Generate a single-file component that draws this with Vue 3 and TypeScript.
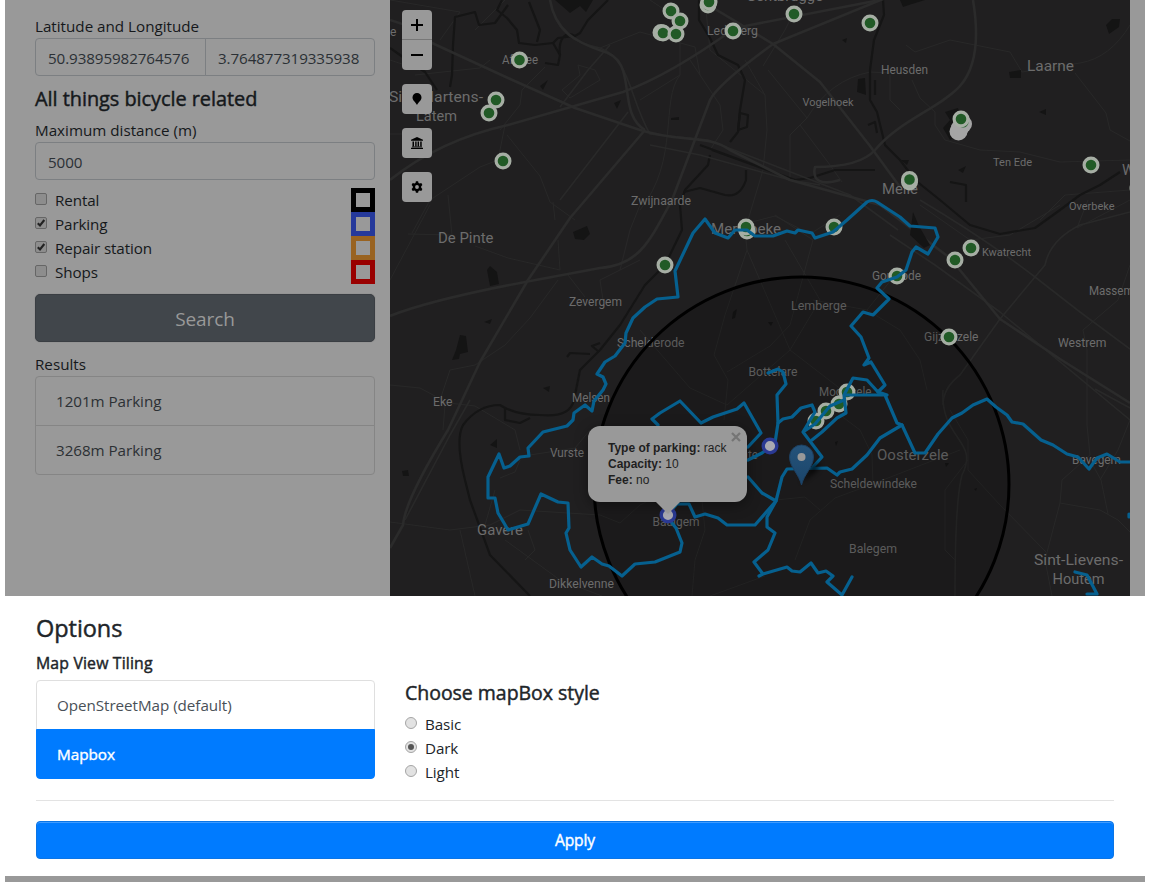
<script setup lang="ts">
import { ref } from 'vue'

interface Label { t: string; x: number; y: number; w?: number; s?: number }
interface Facility { name: string; color: string; checked: boolean }

const latitude = ref('50.93895982764576')
const longitude = ref('3.764877319335938')
const distance = ref('5000')
const facilities = ref<Facility[]>([
  { name: 'Rental', color: '#000000', checked: false },
  { name: 'Parking', color: '#25399b', checked: true },
  { name: 'Repair station', color: '#996321', checked: true },
  { name: 'Shops', color: '#990000', checked: false },
])
const results = ['1201m Parking', '3268m Parking']
const tilings = ['OpenStreetMap (default)', 'Mapbox']
const tiling = ref('Mapbox')
const styles = ['Basic', 'Dark', 'Light']
const mapStyle = ref('Dark')

const labels: Label[] = [
  { t: 'Gentbrugge', x: 746, y: 1, w: 77, s: 15 },
  { t: 'Ledeberg', x: 707, y: 35, w: 51, s: 12.5 },
  { t: 'Afsnee', x: 502, y: 64, w: 36, s: 12 },
  { t: 'Heusden', x: 881, y: 74, w: 47, s: 12 },
  { t: 'Laarne', x: 1027, y: 71, w: 47, s: 15.5 },
  { t: 'Vogelhoek', x: 802.5, y: 105.5, w: 51 },
  { t: 'Ten Ede', x: 993, y: 166, w: 39 },
  { t: 'Overbeke', x: 1069, y: 210, w: 45.5 },
  { t: 'Sint-Martens-', x: 389, y: 102, w: 94, s: 15.5 },
  { t: 'Latem', x: 416, y: 120.5, w: 41, s: 15.5 },
  { t: 'e', x: 390, y: 36, s: 12 },
  { t: 'Melle', x: 882, y: 194, w: 36, s: 14.5 },
  { t: 'W', x: 1122, y: 175, s: 14.5 },
  { t: 'Zwijnaarde', x: 631, y: 205, w: 60, s: 12 },
  { t: 'De Pinte', x: 438, y: 243, w: 55.5, s: 15.5 },
  { t: 'Merelbeke', x: 711, y: 234, w: 70, s: 14.5 },
  { t: 'Kwatrecht', x: 982, y: 256, w: 49 },
  { t: 'Massemen', x: 1089, y: 295, w: 57, s: 12 },
  { t: 'Westrem', x: 1058, y: 346.5, w: 48.5, s: 12 },
  { t: 'Gontrode', x: 872, y: 279.5, w: 49, s: 12 },
  { t: 'Lemberge', x: 791, y: 309.5, w: 55.5, s: 12 },
  { t: 'Zevergem', x: 569, y: 306, w: 53, s: 12 },
  { t: 'Schelderode', x: 617, y: 346.5, w: 67.5, s: 12 },
  { t: 'Gijzenzele', x: 924, y: 341, w: 54.5, s: 12 },
  { t: 'Bottelare', x: 748.5, y: 376, w: 49, s: 12 },
  { t: 'Moortsele', x: 819, y: 396, w: 52.5, s: 12 },
  { t: 'Melsen', x: 572, y: 401.5, w: 38, s: 12 },
  { t: 'Eke', x: 433, y: 406, w: 19.5, s: 12 },
  { t: 'Vurste', x: 550, y: 457, w: 34, s: 12 },
  { t: 'Munte', x: 725, y: 459, w: 33, s: 12 },
  { t: 'Oosterzele', x: 877, y: 459.5, w: 71.5, s: 14.5 },
  { t: 'Bavegem', x: 1072, y: 463.5, w: 49, s: 12 },
  { t: 'Scheldewindeke', x: 830, y: 488, w: 87, s: 12 },
  { t: 'Gavere', x: 477, y: 535, w: 46, s: 14.5 },
  { t: 'Baaigem', x: 652.5, y: 526, w: 47, s: 12 },
  { t: 'Balegem', x: 849, y: 553, w: 48, s: 12 },
  { t: 'Dikkelvenne', x: 549, y: 588, w: 65, s: 12 },
  { t: 'Sint-Lievens-', x: 1034, y: 565, w: 89, s: 15 },
  { t: 'Houtem', x: 1052.5, y: 584, w: 52, s: 15 },
]

const stations: [number, number][] = [
  [671, 11], [661, 32.5], [663, 33], [680, 21], [676, 34], [708, 5], [709, 2], [733, 31],
  [794, 14], [870, 23], [519.5, 60], [496, 100], [489, 113], [503, 161], [909.5, 182],
  [909.5, 179.5], [1091, 165], [747, 231], [746, 227], [834, 227], [665, 265],
  [897, 276], [971, 248], [955, 260], [949, 337], [816, 421], [826, 411], [839, 404], [847, 392],
  [1138, 188],
]

const roads = [
  'M390 180Q440 140 508 125L623 92Q670 75 735 28L880 0',
  'M390 20Q410 25 432 43L508 78L575 108L640 130C680 143 708 134 730 150L790 180L880 205L950 258L1000 319L1060 359L1130 403',
  'M550 0C555 30 575 42 602 51C640 60 615 112 645 130',
  'M645 130L570 218L528 280L480 362L448 430Q405 500 403 525L390 548',
  'M390 316Q430 300 525 282L600 268C640 265 650 240 672 200L710 100Q718 84 773 44L905 -10',
  'M700 0L773 44L820 82L870 146L900 187',
  'M973 0Q983 60 960 86C940 108 900 120 875 150Q860 167 815 167C812 180 820 186 840 180',
]
const midRoads = [
  'M550 -2C555 36 580 44 600 48C630 58 630 100 650 134L708 140L850 195L898 230',
  'M560 107L588 70L610 45M628 112L560 200M650 145L700 155L790 180L820 185',
  'M890 235L935 265L1000 312L1130 420M1000 319L960 375Q943 388 943 405',
  'M1000 319L1045 265Q1050 240 1080 225L1130 212M920 200Q990 242 1035 277L1080 312L1130 349',
  'M943 390C940 440 980 440 962 475Q955 500 955 596',
  'M1095 389L1130 408M470 400L450 435L405 520',
]
const lanes = [
  'M390 134H403M390 280L430 205M448 195L452 235L408 234M475 246L508 258L560 270L558 240M555 220L553 202',
  'M505 125L498 160L480 167L430 200L412 233M507 135L540 176L550 202L575 220',
  'M600 48L640 32L695 47L700 75M580 75L562 90L570 98L600 80L595 70L578 65Z',
  'M500 130L520 105L522 90L545 67M505 0L475 30M415 75L480 68L490 60',
  'M640 100L680 75V20L650 0M690 60L720 105L723 130L710 150M680 75C660 100 680 160 640 210',
  'M705 0L710 50L765 95L767 130L763 170L745 230L747 250L725 315L714 355L728 380L724 420',
  'M745 60L765 95M768 70L807 118L790 135L790 178M800 125L830 165L842 182M800 0L785 30L763 66',
  'M807 118Q830 80 870 72L890 73M740 225L775 216L810 234L840 215M775 215L813 240L790 325L770 346L727 372',
  'M747 250L790 350L842 390M785 240L820 300L790 350M790 350L727 405L690 388L640 330',
  'M813 300L867 310L895 275M867 310L900 330L920 360L927 390',
  'M906 45L915 52L950 40L1010 52L1022 72L1080 63Q1110 58 1130 25',
  'M1075 73L1106 113L1110 130L1130 141M912 80L920 98L935 112L935 125L945 140L980 150L1020 152L1060 162L1130 160',
  'M900 110L890 100L890 75M1130 190L1065 195L1040 220M920 205L970 240L1010 235L1060 205M1088 200L1077 228L1130 200',
  'M1130 265L1118 300L1083 330L1087 350V425L1090 455L1062 480L1060 503L1100 510L1118 520L1130 532',
  'M1060 503L1045 560L1052 596M1090 460L1101 480L1108 514M950 410L968 440V470L1000 505L1046 552',
  'M968 460L945 490L945 550L955 560M390 522L450 530L490 525L520 510L600 515L620 523L640 505L650 500',
  'M460 530L475 596M530 455L575 448L590 430M505 540L560 580L602 596M528 530L535 550L525 560',
  'M440 402L475 406L515 430L520 450M445 405L443 430M500 478L515 472L520 460M485 525L495 490',
  'M558 280L530 318L505 345L475 365L450 370L440 400M568 275L585 297M390 385L420 388L435 396',
  'M710 430L700 480L705 530L695 560L692 596M710 596L765 576M776 500L805 497L820 510',
  'M795 560L810 520L835 498L870 485M840 415L860 430L872 455L873 485M870 485L960 450M1130 420L1118 450L1100 480',
  'M390 0L460 12L440 40M390 60L420 70M640 260L600 280L603 300M640 205L630 230L620 270',
]
const water = [
  'M502 0L497 10L507 18L517 30L519 43L535 45L553 43L560 55L558 65L545 63M508 5L495 23L479 25L475 12L455 17L453 45L452 75L450 87M529 2L540 30L537 42',
  'M390 48L400 55L425 72L437 90M553 43L558 38L575 36L580 33L588 20L598 10L608 0M575 36C565 30 558 40 560 55',
  'M699 0V20L710 38L718 55L738 65L745 80L740 110L738 132L730 142M715 0L720 -5',
  'M883 0L884 15L874 40L870 70V100L877 112L885 145L900 160L915 180L940 200L970 225L1000 234L1035 228L1060 210L1080 195L1100 185L1120 172',
  'M875 170H835L810 178L795 180L712 150M795 180L700 145M710 155L708 165L685 190L680 205L682 230L665 265L645 285L620 325L600 350L580 370L574 400Q570 418 540 415Q515 415 500 405Q478 405 463 425Q455 440 465 480L470 500L490 555L530 596',
  'M684 192L700 188L725 195Q740 198 746 180V170M505 407L505 420L520 423L530 418M567 357L570 353L590 354M599 352L592 346L600 343',
  'M950 182L966 185V202M748 115L740 113L738 130L747 127ZM875 80V95M868 125L875 122L877 133',
]
const ponds = [
  'M555 0L570 13L580 6L586 12L593 0Z', 'M573 232L587 226L590 234L584 240L575 239Z',
  'M487 270L490 266L497 272L499 284L490 286Z', 'M460 335L466 336L468 352L460 354L459 359L452 360L456 350Z',
  'M945 112L958 108L965 130L950 140L943 128L950 120Z', 'M858 79L865 78L866 95L857 92Z',
  'M910 235L913 212L919 226L930 245L924 248Z', 'M1106 25L1112 19L1120 19L1119 27L1109 34Z',
  'M900 0L925 0L912 4L903 7Z', 'M1039 112L1046 109L1046 115Z', 'M1009 72L1021 70V78H1010Z',
  'M958 170L966 166L963 173Z', 'M540 86L548 80L543 90Z', 'M614 103L621 100L617 109Z',
  'M733 312L737 309L735 318L732 319Z', 'M768 322L773 322L771 326Z', 'M402 471L408 470L409 476H403Z',
  'M490 445L497 439V448Z', 'M543 388L550 386L549 392Z', 'M484 322L492 319L490 324Z',
  'M835 442L838 441L836 446Z', 'M945 463L949 463L946 467Z', 'M974 489L977 488L976 491Z',
  'M671 118L679 117V120H671Z', 'M842 40L847 38L846 43Z', 'M901 160L909 160L907 165Z',
]

const routes = [
  'M668 518L676 528L682 543L680 552L655 562L635 564L622 576L609 566L602 564L592 557L581 567L570 550L566 533L569 528L568 503L558 502L541 494L528 524L508 530L504 523L498 513L495 498H488V477L499 454L504 468L510 466L520 457L529 456L528 448L543 432L567 426L573 420L574 413L585 405L592 411L594 401L603 390L606 384L603 377L597 374L605 362L615 356L625 343L626 333L633 318L645 307L657 299L678 297L675 271L693 233L705 219L715 233L728 238L735 230H747L755 236L773 236L787 231L795 233L798 230L812 233L815 238L833 232L847 220L867 202Q872 199 877 202L900 217L910 226L935 228L938 237L928 254L916 247L912 252L906 270L897 277L882 282L877 288L889 299L873 315L863 312L851 326L861 337L869 358L864 365L871 362L885 385L878 392L867 380L853 378L844 395L846 413L837 418L822 432L812 440',
  'M846 395H885L897 423L902 425L915 453H925L938 434L952 418L962 413L973 405L987 399L996 407L1007 415L1012 422L1023 424L1041 440L1053 445L1067 454L1078 457L1089 469L1097 458L1107 454L1120 462H1130',
  'M878 392L887 395M902 425L880 438L867 455L852 469L840 472L837 475L827 468L787 469L782 477L776 501L755 525H727L718 518L705 514L695 517L689 504H677L668 514',
  'M748 477L762 493L776 501L767 517V527L775 533L768 550L754 562L763 574L787 567L792 571L800 572L811 563L818 573L826 571L833 576L827 582L842 595L852 577M763 574L759 576',
  'M658 425L652 419L660 413L680 401L701 423L713 417L737 409L744 403L761 433L748 447M748 460L762 453L775 443L778 423L777 395L786 384L783 372L778 369L768 373',
  'M778 423L783 419L792 417L801 408L812 405L815 412L803 432L822 457L813 467M803 432L815 424L830 406L844 400',
  'M1075 572L1087 575L1097 594L1087 594M1129 514V517',
]
</script>

<template>
  <div class="page">
    <div class="upper">
      <aside class="sidebar">
        <div class="label">Latitude and Longitude</div>
        <div class="group">
          <div class="field first">{{ latitude }}</div>
          <div class="field second">{{ longitude }}</div>
        </div>
        <h5 class="title">All things bicycle related</h5>
        <div class="label">Maximum distance (m)</div>
        <div class="field">{{ distance }}</div>
        <div class="facilities">
          <label v-for="f in facilities" :key="f.name" class="facility" @click="f.checked = !f.checked">
            <svg class="check" width="12" height="12" viewBox="0 0 12 12">
              <rect x=".5" y=".5" width="11" height="11" rx="1.5" fill="#8d8d8d" stroke="#666" />
              <path v-if="f.checked" d="M2.8 6.2L5 8.5L9.3 3" fill="none" stroke="#222" stroke-width="2.1" />
            </svg>
            <span class="name">{{ f.name }}</span>
            <span class="swatch" :style="{ borderColor: f.color }"></span>
          </label>
        </div>
        <button class="search">Search</button>
        <div class="label results">Results</div>
        <ul class="list dim">
          <li v-for="r in results" :key="r">{{ r }}</li>
        </ul>
      </aside>

      <div class="map">
        <svg class="tiles" width="740" height="596" viewBox="390 0 740 596">
          <defs>
            <linearGradient id="pin" x1="0" y1="0" x2="0" y2="1">
              <stop offset="0" stop-color="#25537a" />
              <stop offset="1" stop-color="#1b456a" />
            </linearGradient>
            <filter id="soft" x="-50%" y="-50%" width="200%" height="200%"><feGaussianBlur stdDeviation="2.5" /></filter>
          </defs>
          <rect x="390" width="740" height="596" fill="#201f20" />
          <g fill="none" stroke-linejoin="round">
            <path v-for="d in lanes" :key="d" :d="d" stroke="#282828" />
            <path v-for="d in water" :key="d" :d="d" stroke="#151515" stroke-width="2.2" />
            <path v-for="d in midRoads" :key="d" :d="d" stroke="#292929" stroke-width="1.6" />
            <path v-for="d in roads" :key="d" :d="d" stroke="#2b2b2b" stroke-width="2.6" />
          </g>
          <path v-for="d in ponds" :key="d" :d="d" fill="#141414" />
          <g class="places">
            <text v-for="l in labels" :key="l.t" :x="l.x" :y="l.y" :font-size="l.s ?? 11.5" :textLength="l.w" lengthAdjust="spacingAndGlyphs">{{ l.t }}</text>
          </g>
          <circle cx="801.5" cy="484.5" r="207.5" fill="#000" fill-opacity=".15" stroke="#000" stroke-width="3" />
          <g fill="#a5a5a5">
            <circle cx="958.5" cy="131.500" r="9" /><circle cx="960" cy="128" r="9" /><circle cx="963" cy="124" r="9" />
          </g>
          <circle cx="963" cy="122" r="5.5" fill="#22602a" />
          <g v-for="([x, y], i) in [...stations, [961, 119]]" :key="i">
            <circle :cx="x" :cy="y" r="6.900" fill="#215a26" stroke="#a6aea4" stroke-width="3.2" />
          </g>
          <g fill="none" stroke="#06608f" stroke-width="3.2" stroke-linejoin="round" stroke-linecap="round">
            <path v-for="d in routes" :key="d" :d="d" />
          </g>
          <g fill="#a9a9b2" stroke="#2a3993" stroke-width="3.4">
            <circle cx="770" cy="446" r="6.800" /><circle cx="668" cy="515" r="6.800" />
          </g>
          <path d="M801 483L812 465L820 462L818 470Z" filter="url(#soft)" opacity=".7" />
          <path d="M801.5 485C799 474 789.5 467 789.5 457A12 12 0 0 1 813.500 457C813.500 467 804 474 801.500 485Z" fill="url(#pin)" stroke="#1c4062" />
          <circle cx="801.5" cy="457" r="4" fill="#999" />
        </svg>

        <div class="controls">
          <div class="zoom">
            <button><svg width="14" height="14" viewBox="0 0 14 14"><path d="M7 1V13M1 7H13" stroke="#000" stroke-width="2" /></svg></button>
            <button><svg width="14" height="14" viewBox="0 0 14 14"><path d="M1 7H13" stroke="#000" stroke-width="2" /></svg></button>
          </div>
          <button class="tool"><svg width="10" height="12" viewBox="0 0 10 12"><path d="M5 0A4.5 4.5 0 0 1 9.500 4.500C9.500 7.500 6.500 9 5 12C3.500 9 .5 7.500 .5 4.500A4.500 4.500 0 0 1 5 0Z" /></svg></button>
          <button class="tool"><svg width="12" height="12" viewBox="0 0 12 12"><path d="M6 0L12 2.800V3.800H0V2.800ZM1.500 4.500H3V9.200H1.500ZM4.200 4.500H5.600V9.200H4.200ZM6.600 4.500H8V9.200H6.600ZM9.200 4.500H10.700V9.200H9.200ZM1 9.600H11V10.300H1ZM0 10.800H12V12H0Z" /></svg></button>
          <button class="tool"><svg width="12" height="12" viewBox="0 0 12 12"><path d="M4.900 .3H7.100L7.500 2L8.600 2.600L10.300 2.100L11.400 4L10.200 5.300V6.700L11.400 8L10.300 9.900L8.600 9.400L7.500 10L7.100 11.700H4.900L4.500 10L3.400 9.400L1.700 9.900L.6 8L1.800 6.700V5.300L.6 4L1.700 2.100L3.400 2.600L4.500 2ZM6 4.100A1.900 1.900 0 1 0 6 7.900A1.900 1.900 0 1 0 6 4.100Z" fill-rule="evenodd" /></svg></button>
        </div>

        <div class="popup">
          <svg class="close" width="10" height="10" viewBox="0 0 10 10"><path d="M1 1L9 9M9 1L1 9" stroke="#757575" stroke-width="2.2" /></svg>
          <div><b>Type of parking:</b> rack</div>
          <div><b>Capacity:</b> 10</div>
          <div><b>Fee:</b> no</div>
        </div>
      </div>
    </div>

    <section class="options">
      <h4>Options</h4>
      <div class="columns">
        <div class="tiling">
          <h6>Map View Tiling</h6>
          <ul class="list">
            <li v-for="t in tilings" :key="t" :class="{ active: t === tiling }" @click="tiling = t">{{ t }}</li>
          </ul>
        </div>
        <div class="styles">
          <h5>Choose mapBox style</h5>
          <label v-for="s in styles" :key="s" class="choice" @click="mapStyle = s">
            <span class="radio" :class="{ on: s === mapStyle }"></span>
            <span>{{ s }}</span>
          </label>
        </div>
      </div>
      <hr />
      <button class="apply">Apply</button>
    </section>
    <div class="below"></div>
  </div>
</template>

<style>
body { margin: 0; overflow: hidden; background: #fff; }
</style>

<style scoped>
.page { box-sizing: border-box; width: 1150px; height: 882px; padding: 0 5px; overflow: hidden; font: 15.2px/24px "Open Sans", "Noto Sans", sans-serif; letter-spacing: -.1px; color: #212529; }
* { box-sizing: border-box; }
button { font: inherit; letter-spacing: inherit; border: 0; padding: 0; }
h4, h5, h6, ul { margin: 0; padding: 0; list-style: none; font-weight: 400; }
h4, h5, h6 { -webkit-text-stroke: .45px currentColor; }
.label { letter-spacing: 0; }
.upper { display: flex; height: 596px; background: #999; }
.sidebar { width: 385px; padding: 14px 15px 0 30px; color: #15181b; }
.group { display: flex; }
.field { height: 38px; padding: 1px 12px 0; font-size: 15.200px; line-height: 37px; border: 1px solid #7c7f82; border-radius: 4px; color: #2b3035; letter-spacing: -.1px; }
.group .field { width: 171px; }
.group .first { border-radius: 4px 0 0 4px; }
.group .second { width: 170px; margin-left: -1px; border-radius: 0 4px 4px 0; }
.title { margin: 10px 0 8px; padding-top: 1px; font-size: 19.900px; line-height: 23px; letter-spacing: -.03px; }
.facilities { margin-top: 8px; }
.facility { display: flex; height: 24px; align-items: center; }
.check { margin-top: -3px; }
.name { margin-left: 8px; margin-top: -1px; }
.swatch { width: 24px; height: 24px; margin-left: auto; border: 5px solid; }
.search { display: block; width: 340px; height: 48px; margin: 10px 0; padding-top: 2px; border: 1px solid #3a3e43; border-radius: 5px; background: #41464b; color: #999; font-size: 19px; box-shadow: 0 0 1px #666; }
.list li { height: 50px; padding: 0 20px; line-height: 48px; border: 1px solid #dfdfdf; color: #495057; letter-spacing: -.04px; }
.list li + li { margin-top: -1px; }
.list li:first-child { border-radius: 4px 4px 0 0; }
.list li:last-child { border-radius: 0 0 4px 4px; }
.dim li { border-color: #858585; color: #2c3034; }
.list li.active { background: #007bff; border-color: #007bff; color: #fff; font-size: 15.300px; -webkit-text-stroke: .4px #fff; }
.map { position: relative; width: 740px; height: 596px; overflow: hidden; }
.tiles { display: block; }
.places { font-family: Roboto, sans-serif; letter-spacing: 0; fill: #6c6c6c; }
.controls { position: absolute; left: 12px; top: 10px; display: flex; flex-direction: column; gap: 14px; }
.controls button { display: flex; width: 30px; height: 30px; align-items: center; justify-content: center; background: #999; }
.zoom { border-radius: 4px; overflow: hidden; }
.zoom button:first-child { border-bottom: 1px solid #777; }
.controls .tool { border-radius: 4px; }
.popup { position: absolute; left: 198px; top: 426px; width: 159px; height: 76px; padding: 14px 0 0 20px; border-radius: 12px; background: #999; color: #1f1f1f; font: 12px/16px "Liberation Sans", Arial, sans-serif; letter-spacing: 0; white-space: nowrap; box-shadow: 0 3px 14px rgba(0, 0, 0, .4); }
.popup::after { content: ""; position: absolute; left: 68px; top: 76px; border: 12px solid transparent; border-top-color: #999; border-bottom: 0; }
.close { position: absolute; right: 6px; top: 6px; }
.options { height: 280px; padding: 20px 31px 0; background: #fff; }
.options h4 { height: 28px; line-height: 25px; font-size: 23.500px; letter-spacing: -.05px; }
.columns { display: flex; gap: 30px; height: 155px; }
.tiling { width: 339px; padding-top: 9px; }
.tiling h6 { height: 27px; font-size: 15.800px; line-height: 20px; letter-spacing: .16px; }
.styles { padding-top: 37px; }
.styles h5 { height: 31px; line-height: 24px; font-size: 19.500px; letter-spacing: -.03px; }
.choice { display: flex; height: 24px; align-items: center; }
.radio { display: flex; width: 12px; height: 12px; margin: -2px 8px 0 0; border: 1px solid #a5a5a5; border-radius: 50%; background: #e2e2e2; align-items: center; justify-content: center; }
.radio.on::after { content: ""; width: 6px; height: 6px; border-radius: 50%; background: #555; }
hr { height: 1px; margin: 1px 0 20px; border: 0; background: #e3e3e3; }
.apply { display: block; width: 100%; height: 38px; border: 1px solid #0b75e6; border-radius: 4px; background: #007bff; color: #fff; font-size: 15.600px; -webkit-text-stroke: .4px #fff; box-shadow: inset 0 1px 0 #409cff; }
.below { height: 6px; background: #999; }
</style>
